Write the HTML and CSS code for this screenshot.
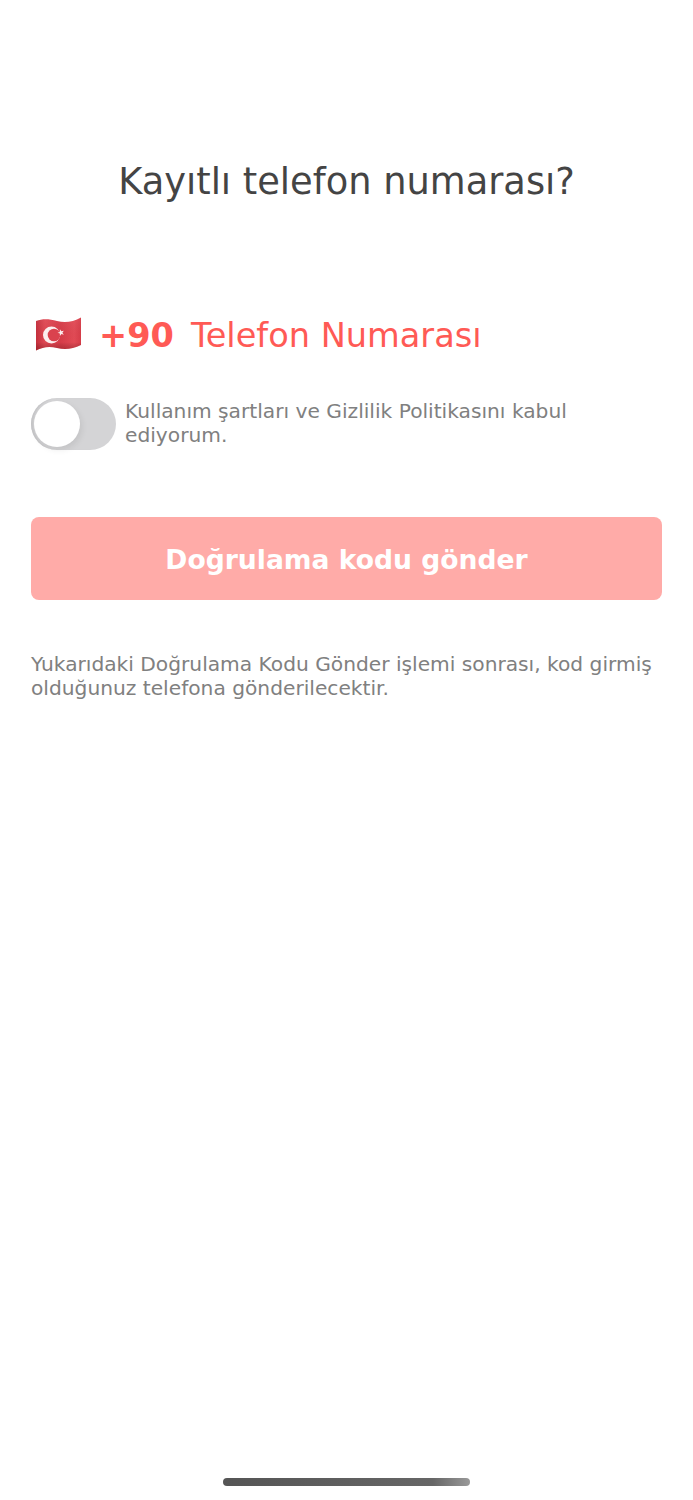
FILE: index.html
```html
<!doctype html>
<html lang="tr">
<head>
    <meta charset="utf-8">
    <meta name="viewport" content="width=device-width, initial-scale=1">
    <title>Kayıtlı telefon numarası</title>
    <link rel="stylesheet" href="styles.css">
</head>
<body>
    <div class="screen">
        <h1 class="title">Kayıtlı telefon numarası?</h1>

        <div class="phone">
            <svg class="flag" width="48" height="36" viewBox="0 0 48 36">
                <defs>
                    <linearGradient id="flagWave" x1="0" y1="0" x2="1" y2="0">
                        <stop offset="0" stop-color="#c42f3c"/>
                        <stop offset="0.2" stop-color="#e04853"/>
                        <stop offset="0.55" stop-color="#d63c48"/>
                        <stop offset="0.85" stop-color="#e24a55"/>
                        <stop offset="1" stop-color="#d63c48"/>
                    </linearGradient>
                    <linearGradient id="flagShade" x1="0" y1="0" x2="0" y2="1">
                        <stop offset="0" stop-color="#fff" stop-opacity="0.05"/>
                        <stop offset="0.75" stop-color="#000" stop-opacity="0"/>
                        <stop offset="1" stop-color="#600" stop-opacity="0.3"/>
                    </linearGradient>
                </defs>
                <path d="M1 4 C8 1.500 14 2 22 4 C30 6 38 5 46 0.500 L46 28 C38 32 30 33 22 31 C14 29 8 30 1 33.500 Z" fill="url(#flagWave)"/>
                <path d="M1 4 C8 1.500 14 2 22 4 C30 6 38 5 46 0.500 L46 28 C38 32 30 33 22 31 C14 29 8 30 1 33.500 Z" fill="url(#flagShade)"/>
                <circle cx="16.500" cy="18" r="8.500" fill="#fbeeee"/>
                <circle cx="19" cy="18" r="6.300" fill="#da424e"/>
                <polygon points="22.500,15.700 24.870,14.880 24.920,12.370 26.430,14.370 28.830,13.640 27.400,15.700 28.830,17.760 26.430,17.030 24.920,19.030 24.870,16.520" fill="#fbeeee"/>
            </svg>
            <span class="code">+90</span>
            <span class="placeholder">Telefon Numarası</span>
        </div>

        <div class="terms">
            <div class="switch"><span class="knob"></span></div>
            <p class="note terms-text">Kullanım şartları ve Gizlilik Politikasını kabul ediyorum.</p>
        </div>

        <button class="send" type="button">Doğrulama kodu gönder</button>

        <p class="note info">Yukarıdaki Doğrulama Kodu Gönder işlemi sonrası, kod girmiş olduğunuz telefona gönderilecektir.</p>
    </div>

    <div class="home-bar"></div>
</body>
</html>
```

FILE: styles.css
```css
* {
    margin: 0;
    padding: 0;
    box-sizing: border-box;
    font-family: "DejaVu Sans", sans-serif;
}

body {
    height: 1500px;
    background-color: #fff;
    overflow: hidden;
    position: relative;
}

.screen {
    display: flex;
    flex-direction: column;
    padding: 159px 31px 0;
}

.title {
    font-size: 36.8px;
    font-weight: 400;
    line-height: 46px;
    text-align: center;
    color: #444;
}

.phone {
    display: flex;
    align-items: center;
    height: 50px;
    margin-top: 105px;
    padding-left: 4px;
    color: #ff5a55;
}

.flag {
    flex: none;
    margin-right: 16px;
}

.code {
    font-size: 33.6px;
    font-weight: 700;
    margin-right: 17px;
}

.placeholder {
    font-size: 33.6px;
}

.terms {
    display: flex;
    align-items: center;
    margin-top: 38px;
}

.switch {
    flex: none;
    width: 85px;
    height: 52px;
    margin-right: 9px;
    padding: 3px;
    border-radius: 26px;
    background-color: #d4d4d6;
    box-shadow: inset 3px 0 2px -1px #c4c4c6;
}

.knob {
    display: block;
    width: 46px;
    height: 46px;
    border-radius: 50%;
    background-color: #fff;
    box-shadow: 2px 3px 6px rgba(0, 0, 0, 0.08);
}

.note {
    font-size: 20.2px;
    line-height: 24px;
    color: #808080;
}

.terms-text {
    margin-bottom: 2px;
}

.send {
    height: 83px;
    margin-top: 67px;
    padding-top: 2px;
    border: none;
    border-radius: 8px;
    background-color: #ffaba8;
    color: #fff;
    font-size: 26.6px;
    font-weight: 700;
}

.info {
    margin-top: 52px;
}

.home-bar {
    position: absolute;
    left: 223px;
    top: 1478px;
    width: 247px;
    height: 8px;
    border-radius: 4px;
    background: linear-gradient(to right, #555 0%, #666 85%, #999 100%);
}
```
